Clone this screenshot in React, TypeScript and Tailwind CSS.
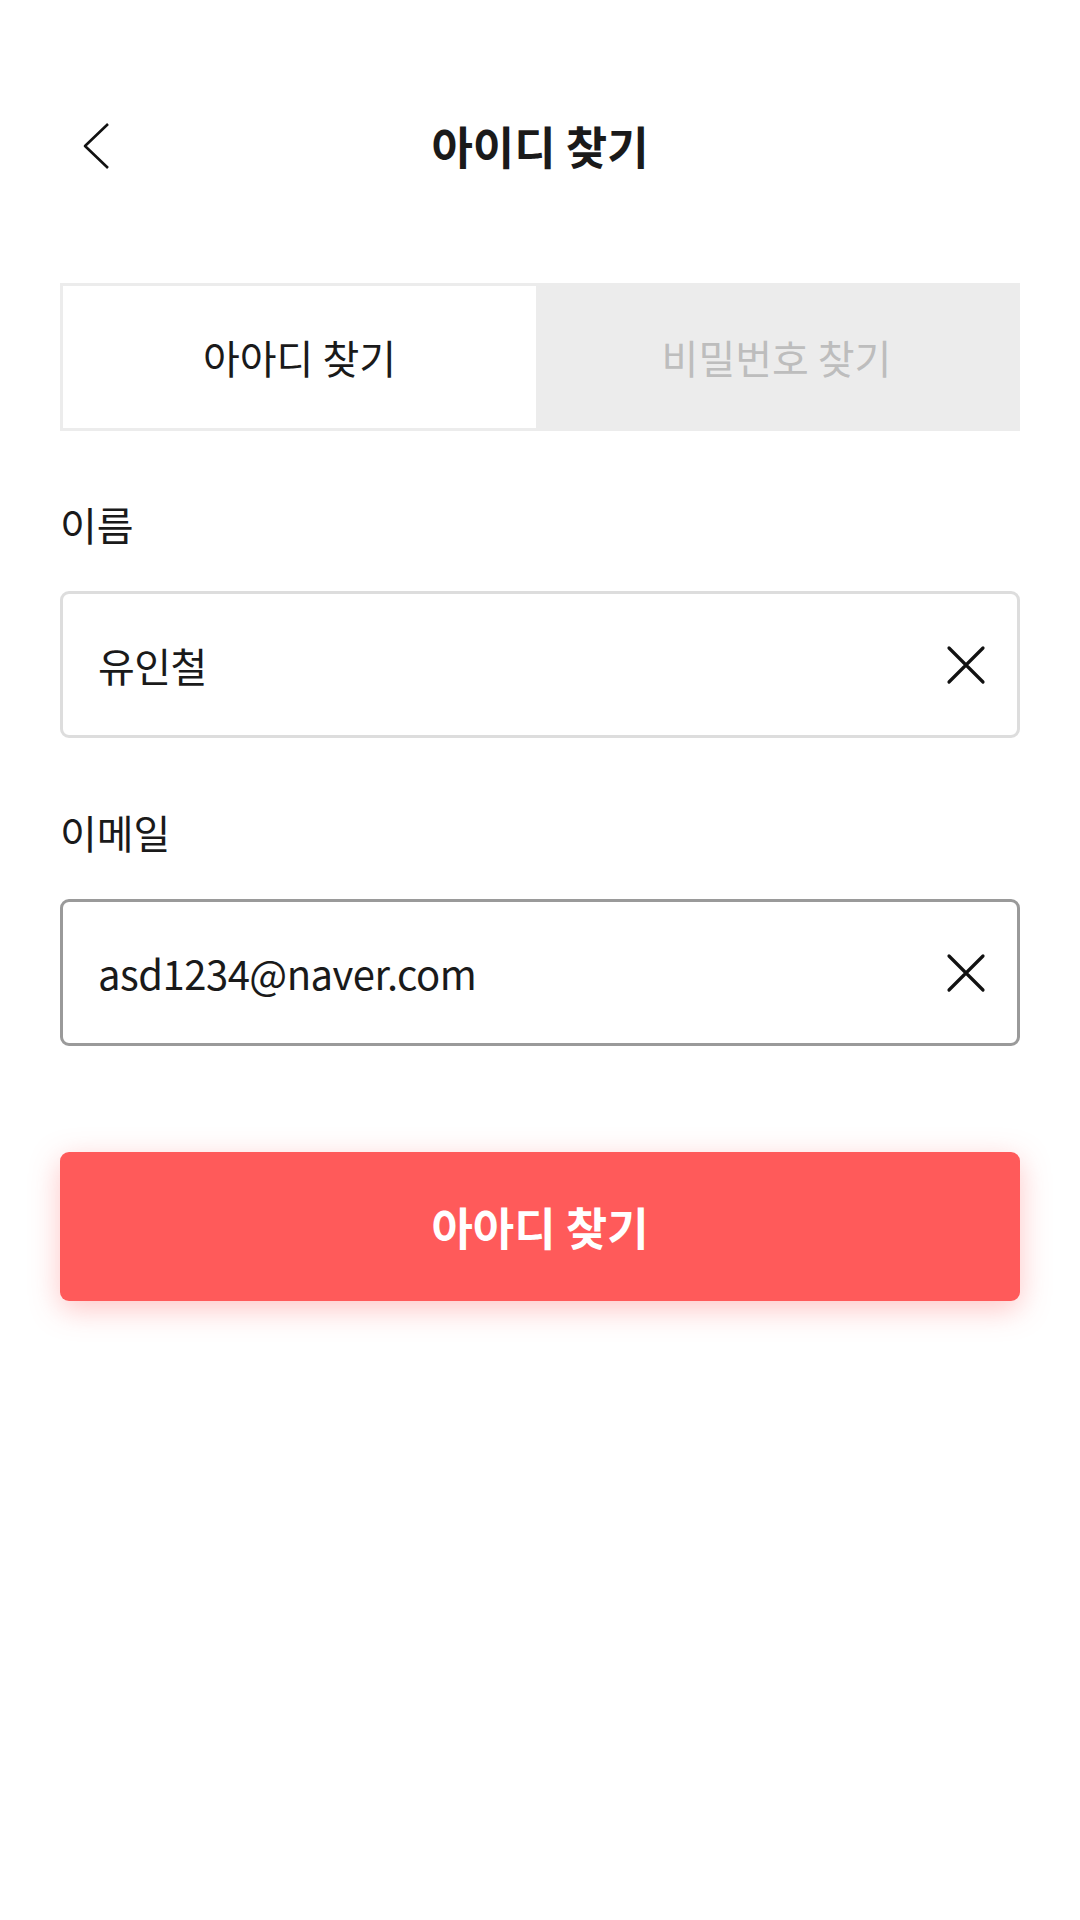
import React from 'react';

const font = "font-['Noto_Sans_CJK_KR','Noto_Sans',sans-serif]";

const ClearIcon: React.FC = () => (
  <svg width="40" height="40" viewBox="0 0 40 40" fill="none">
    <path d="M3 3L37 37M37 3L3 37" stroke="#111" strokeWidth="3.2" strokeLinecap="round" />
  </svg>
);

const Field: React.FC<{ label: string; value: string; focused?: boolean; first?: boolean }> = ({ label, value, focused, first }) => (
  <div>
    <div className={`${first ? 'mt-[67px]' : 'mt-[68px]'} h-[52px] leading-[52px] text-[40px] text-[#1a1a1a]`}>{label}</div>
    <div
      className={`mt-[41px] h-[147px] rounded-[9px] border-[3px] bg-white flex items-center justify-between pl-[35px] pr-[31px] ${
        focused ? 'border-[#9a9a9a]' : 'border-[#dddddd]'
      }`}
    >
      <span className="text-[40px] text-[#1a1a1a] tracking-[-0.5px]">{value}</span>
      <ClearIcon />
    </div>
  </div>
);

export default function App() {
  return (
    <div className={`${font} w-[1080px] min-h-[1920px] bg-white px-[60px]`}>
      {/* header */}
      <div className="relative h-[222px] pt-[72px]">
        <div className="h-[148px] flex items-center justify-center">
          <svg className="absolute left-[22px] top-[122px]" width="30" height="48" viewBox="0 0 30 48" fill="none">
            <path d="M26 2L3 24L26 46" stroke="#111" strokeWidth="2.6" strokeLinejoin="round" />
          </svg>
          <h1 className="text-[45px] font-bold text-[#1a1a1a]">아이디 찾기</h1>
        </div>
      </div>

      {/* tabs */}
      <div className="mt-[61px] h-[148px] grid grid-cols-[473px_1fr] border-[3px] border-[#ececec] bg-[#ececec]">
        <div className="bg-white flex items-center justify-center text-[40px] text-[#1a1a1a]">
          아아디 찾기
        </div>
        <div className="flex items-center justify-center text-[40px] text-[#bdbdbd]">
          비밀번호 찾기
        </div>
      </div>

      <Field label="이름" value="유인철" first />
      <Field label="이메일" value="asd1234@naver.com" focused />

      <button className="mt-[106px] w-full h-[149px] rounded-[9px] bg-[#ff5a5a] shadow-[0_8px_30px_rgba(255,90,90,0.35)] text-white text-[45px] font-bold">
        아아디 찾기
      </button>
    </div>
  );
}
